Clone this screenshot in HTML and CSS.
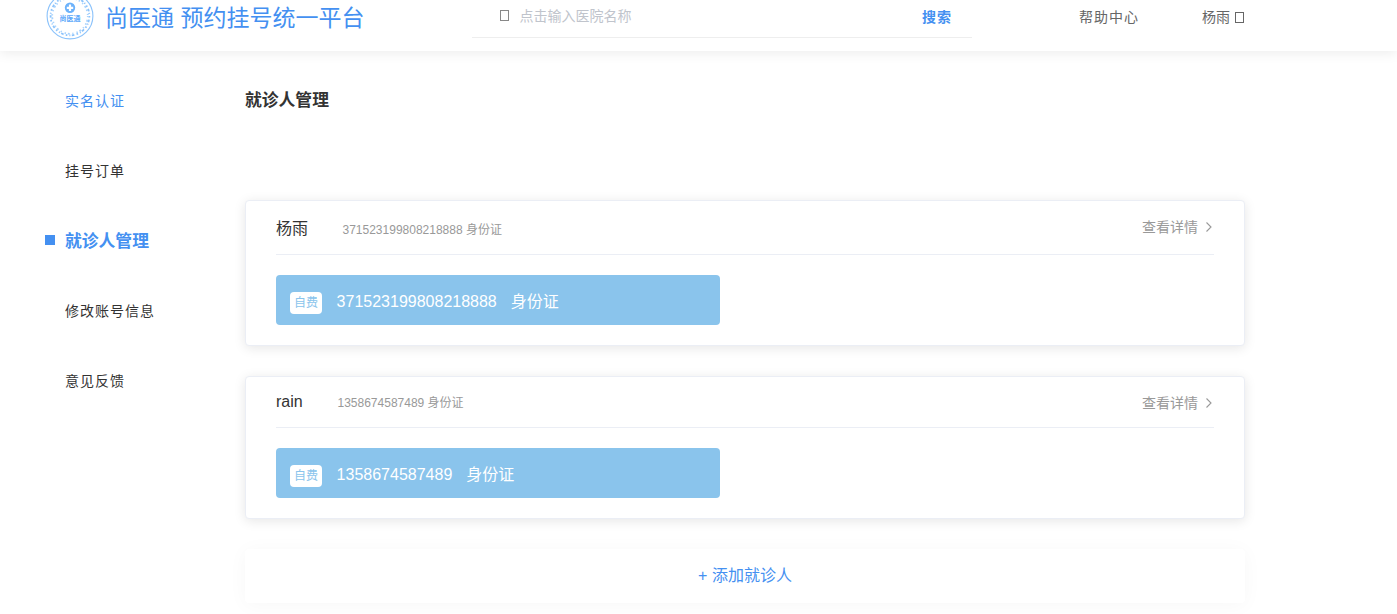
FILE: index.html
```html
<!DOCTYPE html>
<html lang="zh-CN">
<head>
<meta charset="utf-8">
<title>尚医通</title>
<link rel="stylesheet" href="styles.css">
</head>
<body>
<header class="header">
  <div class="brand">
    <svg class="logo" viewBox="0 0 48 48" width="48" height="48" fill="none" stroke="#8cc3fb">
      <circle cx="24" cy="24" r="22.9" stroke-width="1.1"/>
      <circle cx="24" cy="24" r="19.4" stroke-width="1.8" stroke-dasharray="1.6 2.2 2.6 1.5 1 2.1"/>
      <circle cx="24" cy="24" r="17.8" stroke-width="1.8" stroke="#a9d3fd" stroke-dasharray="1.2 2.6 2 1.9 1.4 3"/>
      <circle cx="24" cy="15.8" r="5.2" fill="#6cb2fb" stroke="none"/>
      <path d="M24 12.6v6.4M20.8 15.8h6.4" stroke="#fff" stroke-width="2.2"/>
      <text class="logo-text" x="24" y="29.4" text-anchor="middle">尚医通</text>
    </svg>
    <span class="brand-name">尚医通 预约挂号统一平台</span>
  </div>
  <div class="search">
    <i class="tofu tofu-search"></i>
    <span class="placeholder">点击输入医院名称</span>
    <span class="search-btn">搜索</span>
  </div>
  <nav class="links">
    <span class="help">帮助中心</span>
    <span class="user">杨雨</span>
    <i class="tofu tofu-user"></i>
  </nav>
</header>
<div class="page">
  <aside class="menu">
    <a class="item verified">实名认证</a>
    <a class="item">挂号订单</a>
    <a class="item selected">就诊人管理</a>
    <a class="item">修改账号信息</a>
    <a class="item">意见反馈</a>
  </aside>
  <main class="main">
    <h1 class="title">就诊人管理</h1>
    <section class="card">
      <div class="card-head">
        <span class="name">杨雨</span>
        <span class="id">371523199808218888 身份证</span>
        <span class="detail">查看详情<svg class="chevron" width="8" height="12" viewBox="0 0 8 12"><path d="M1.5 1.5 6 6 1.5 10.5"/></svg></span>
      </div>
      <div class="bar"><span class="tag">自费</span><span class="number">371523199808218888</span><span>身份证</span></div>
    </section>
    <section class="card card-latin">
      <div class="card-head">
        <span class="name">rain</span>
        <span class="id">1358674587489 身份证</span>
        <span class="detail">查看详情<svg class="chevron" width="8" height="12" viewBox="0 0 8 12"><path d="M1.5 1.5 6 6 1.5 10.5"/></svg></span>
      </div>
      <div class="bar"><span class="tag">自费</span><span class="number">1358674587489</span><span>身份证</span></div>
    </section>
    <div class="add">+ 添加就诊人</div>
  </main>
</div>
</body>
</html>
```
FILE: styles.css
```css
* { box-sizing: border-box; }
body {
  margin: 0;
  height: 614px;
  overflow: hidden;
  background: #fff;
  color: #333;
  font: 14px/20px "Liberation Sans", "Noto Sans CJK SC", sans-serif;
}
.header {
  display: flex;
  height: 51px;
  padding-left: 46px;
  box-shadow: 0 2px 12px rgba(0, 0, 0, .08);
}
.brand { display: flex; width: 426px; height: 34px; align-items: center; }
.logo { flex: none; margin-top: -2px; }
.logo-text { font-size: 7px; font-weight: 700; fill: #5ca8fa; stroke: none; }
.brand-name {
  margin-left: 11px;
  padding-top: 1px;
  color: #4490f1;
  font-size: 23px;
  line-height: 34px;
  white-space: nowrap;
}
.search {
  display: flex;
  width: 500px;
  height: 38px;
  padding: 6px 20px 0 28px;
  border-bottom: 1px solid #eee;
}
.tofu { flex: none; width: 9px; height: 11px; border: 1px solid #888; }
.tofu-search { margin: 4px 10.5px 0 0; }
.placeholder { color: #c0c4cc; }
.search-btn {
  margin: 1px 0 0 auto;
  color: #4490f1;
  font-size: 14px;
  font-weight: 700;
  letter-spacing: 1px;
}
.links { display: flex; padding: 7px 0 0 107px; color: #666; }
.help { width: 123px; letter-spacing: 1px; }
.tofu-user { margin: 5px 0 0 5px; border-color: #666; }
.page { display: flex; padding: 25px 0 0 45px; }
.menu { width: 200px; }
.item {
  display: flex;
  align-items: center;
  height: 50px;
  margin-bottom: 20px;
  padding-left: 20px;
  font-size: 14px;
  letter-spacing: 1px;
}
.verified { color: #4490f1; }
.selected {
  padding: 2px 0 0;
  color: #4490f1;
  font-size: 16.8px;
  font-weight: 700;
  letter-spacing: 0;
}
.selected::before {
  content: "";
  width: 10px;
  height: 10px;
  margin: -4px 10px 0 0;
  background: #4490f1;
}
.main { width: 1000px; }
.title {
  height: 124px;
  margin: 0;
  padding-top: 15px;
  font-size: 16.8px;
  font-weight: 700;
}
.card {
  height: 146px;
  margin-bottom: 30px;
  padding: 0 30px;
  border: 1px solid #ebeef5;
  border-radius: 4px;
  background: #fff;
  box-shadow: 0 2px 12px rgba(0, 0, 0, .1);
}
.card-head {
  display: flex;
  height: 54px;
  padding-top: 18px;
  border-bottom: 1px solid #ebeef5;
}
.name { width: 66.5px; font-size: 16px; }
.id { padding-top: 1px; color: #999; font-size: 12px; }
.detail { display: flex; align-items: center; height: 20px; margin: -2px 0 0 auto; color: #999; }
.chevron { margin: 0 1px 0 7px; fill: none; stroke: #999; stroke-width: 1.1; }
.bar {
  display: flex;
  align-items: center;
  width: 444px;
  height: 50px;
  margin-top: 20px;
  padding: 4px 14px 0;
  border-radius: 4px;
  background: #8ac4ec;
  color: #fff;
  font-size: 16px;
}
.tag {
  width: 32px;
  height: 22px;
  margin: 2px 14.6px 0 0;
  border-radius: 4px;
  background: #fff;
  color: #8ac4ec;
  font-size: 12px;
  line-height: 22px;
  text-align: center;
}
.number { margin-right: 14px; }
.card-latin { height: 143px; }
.card-latin .card-head { height: 51px; padding-top: 15px; }
.card-latin .name { width: 61.5px; }
.card-latin .detail { margin-top: 1px; }
.add {
  height: 54px;
  border-radius: 4px;
  background: #fff;
  box-shadow: 0 2px 20px rgba(0, 0, 0, .035);
  color: #4490f1;
  font-size: 16px;
  line-height: 54px;
  text-align: center;
}
```
